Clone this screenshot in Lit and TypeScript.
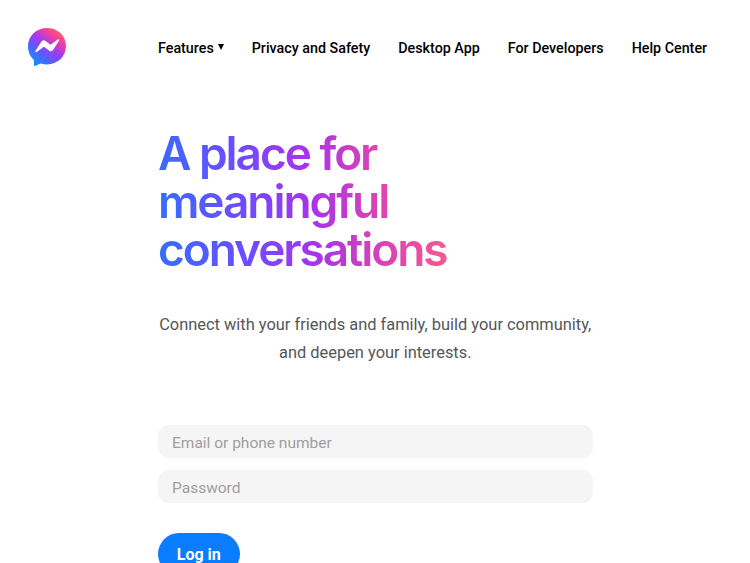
import { LitElement, html, css } from "lit";
import { customElement } from "lit/decorators.js";

@customElement("app-root")
export class AppRoot extends LitElement {
  static styles = css`
    :host { display: block; width: 750px; height: 563px; overflow: hidden; background: #fff; font-family: Inter, sans-serif; }
    .nav { display: flex; align-items: center; height: 94px; padding-left: 28px; }
    .logo { width: 38px; height: 38px; display: block; margin-top: -1px; flex: none; }
    .links { display: flex; gap: 28px; margin-left: 92px; margin-top: 2px; font-family: Roboto, sans-serif; font-size: 14.3px; font-weight: 500; color: #000; }
    .links span { white-space: nowrap; }
    .caret { display: inline-block; width: 0; height: 0; border-left: 3.5px solid transparent; border-right: 3.5px solid transparent; border-top: 6.5px solid #000; margin-left: 4px; vertical-align: 3px; }
    .main { margin-left: 157.5px; width: 435.5px; display: flex; flex-direction: column; }
    h1 { margin: 35px 0 0 0.5px; font-size: 46px; line-height: 48px; font-weight: 600; letter-spacing: -2.05px; width: 289px; white-space: nowrap;
      background: linear-gradient(83deg, #3170ff 0%, #6d4cff 30%, #a633ec 52%, #dc45b0 76%, #ff5c87 100%);
      -webkit-background-clip: text; background-clip: text; color: transparent; }
    p { margin: 38px 0 0; text-align: center; font-family: Roboto, sans-serif; font-size: 16.42px; line-height: 28px; color: #55565a; white-space: nowrap; }
    .field { box-sizing: border-box; height: 33px; padding: 2px 0 0 14.5px; border-radius: 11px; background: #f5f5f5; display: flex; align-items: center; font-family: Roboto, sans-serif; font-size: 15.5px; color: #9e9e9e; }
    .f1 { margin-top: 58px; }
    .f2 { margin-top: 12px; }
    .btn { margin-top: 30px; width: 82.5px; height: 42px; border-radius: 21px; background: #0a7cff; color: #fff; font-family: Roboto, sans-serif; font-weight: 700; font-size: 16px; display: flex; align-items: center; justify-content: center; }
  `;
  render() {
    return html`
      <div class="nav">
        <svg class="logo" viewBox="0 0 38 38">
          <defs>
            <linearGradient id="g" x1="6" y1="36" x2="32" y2="3" gradientUnits="userSpaceOnUse">
              <stop offset="0" stop-color="#0a93ff"/>
              <stop offset=".3" stop-color="#5a5cff"/>
              <stop offset=".55" stop-color="#a03bf0"/>
              <stop offset=".8" stop-color="#f0409f"/>
              <stop offset="1" stop-color="#ff5f6b"/>
            </linearGradient>
          </defs>
          <path fill="url(#g)" d="M19 0C8.300 0 0 7.800 0 18.400c0 5.500 2.300 10.300 6 13.600v5.400c0 .5.500.8 1 .6l5.600-2.500c2 .5 4.200.9 6.400.9 10.700 0 19-7.800 19-18.400S29.700 0 19 0z"/>
          <path fill="#fff" d="M7.500 22.800l6-9.300c.8-1.300 2.500-1.600 3.700-.7l4.700 3.500c.4.300 1 .3 1.400 0l6.400-4.800c.8-.7 1.900.3 1.300 1.200l-5.900 9.300c-.9 1.300-2.600 1.600-3.800.7l-4.700-3.500c-.4-.3-1-.3-1.400 0l-6.400 4.800c-.8.600-1.900-.3-1.300-1.200z"/>
        </svg>
        <div class="links">
          <span>Features<i class="caret"></i></span>
          <span>Privacy and Safety</span>
          <span>Desktop App</span>
          <span>For Developers</span>
          <span>Help Center</span>
        </div>
      </div>
      <div class="main">
        <h1>A place for<br>meaningful<br>conversations</h1>
        <p>Connect with your friends and family, build your community,<br>and deepen your interests.</p>
        <div class="field f1">Email or phone number</div>
        <div class="field f2">Password</div>
        <div class="btn">Log in</div>
      </div>
    `;
  }
}
